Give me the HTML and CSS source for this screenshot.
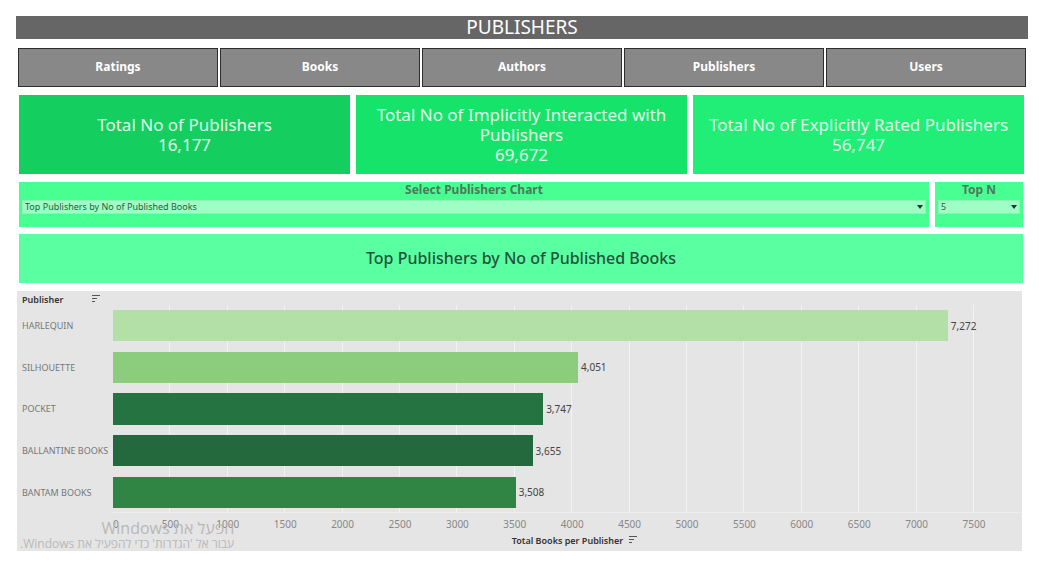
FILE: index.html
```html
<!DOCTYPE html>
<html lang="en">
<head>
<meta charset="utf-8">
<meta name="viewport" content="width=device-width, initial-scale=1">
<title>Publishers</title>
<link rel="stylesheet" href="styles.css">
</head>
<body>
<header class="banner"><h1>PUBLISHERS</h1></header>
<main class="dashboard">
  <nav class="tabs">
    <a href="#ratings">Ratings</a>
    <a href="#books">Books</a>
    <a href="#authors">Authors</a>
    <a href="#publishers" aria-current="page">Publishers</a>
    <a href="#users">Users</a>
  </nav>

  <section class="totals">
    <div class="total total-all"><p>Total No of Publishers</p><p>16,177</p></div>
    <div class="total total-implicit"><p>Total No of Implicitly Interacted with Publishers</p><p>69,672</p></div>
    <div class="total total-explicit"><p>Total No of Explicitly Rated Publishers</p><p>56,747</p></div>
  </section>

  <section class="filters">
    <div class="filter filter-chart">
      <label for="chart">Select Publishers Chart</label>
      <div class="dropdown">
        <select id="chart"><option>Top Publishers by No of Published Books</option></select>
        <svg class="caret" viewBox="0 0 6 4" aria-hidden="true"><path d="M0 0h6L3 4z"/></svg>
      </div>
    </div>
    <div class="filter filter-top">
      <label for="top">Top N</label>
      <div class="dropdown">
        <select id="top"><option>5</option></select>
        <svg class="caret" viewBox="0 0 6 4" aria-hidden="true"><path d="M0 0h6L3 4z"/></svg>
      </div>
    </div>
  </section>

  <h2 class="chart-title">Top Publishers by No of Published Books</h2>

  <section class="chart">
    <div class="chart-head">
      <span>Publisher</span>
      <svg class="sort" viewBox="0 0 8 8" aria-hidden="true"><path d="M0 .5h8M0 3.5h5M0 6.5h3"/></svg>
    </div>
    <ul class="names">
      <li>HARLEQUIN</li><li>SILHOUETTE</li><li>POCKET</li><li>BALLANTINE BOOKS</li><li>BANTAM BOOKS</li>
    </ul>
    <div class="gridlines" aria-hidden="true">
      <i></i><i></i><i></i><i></i><i></i><i></i><i></i><i></i><i></i><i></i><i></i><i></i><i></i><i></i><i></i>
    </div>
    <div class="bars">
      <div class="row"><div class="bar green-1" style="width:91.84%"></div><span>7,272</span></div>
      <div class="row"><div class="bar green-2" style="width:51.16%"></div><span>4,051</span></div>
      <div class="row"><div class="bar green-4" style="width:47.32%"></div><span>3,747</span></div>
      <div class="row"><div class="bar green-5" style="width:46.16%"></div><span>3,655</span></div>
      <div class="row"><div class="bar green-3" style="width:44.3%"></div><span>3,508</span></div>
    </div>
    <div class="axis">
      <span>0</span><span>500</span><span>1000</span><span>1500</span><span>2000</span><span>2500</span><span>3000</span><span>3500</span><span>4000</span><span>4500</span><span>5000</span><span>5500</span><span>6000</span><span>6500</span><span>7000</span><span>7500</span>
    </div>
    <div class="axis-title">
      <span>Total Books per Publisher</span>
      <svg class="sort" viewBox="0 0 8 8" aria-hidden="true"><path d="M0 .5h8M0 3.5h5M0 6.5h3"/></svg>
    </div>
    <div class="watermark" lang="he" dir="rtl">
      <p class="watermark-title">הפעל את Windows</p>
      <p>עבור אל 'הגדרות' כדי להפעיל את Windows.</p>
    </div>
  </section>
</main>
</body>
</html>
```

FILE: styles.css
```css
* { box-sizing: border-box; }

body {
  margin: 0;
  padding: 16px 11px 12px 16px;
  background: #fff;
  color: #333;
  font-family: "Noto Sans", "Open Sans", sans-serif;
}

h1, h2, p, ul { margin: 0; padding: 0; font-weight: 400; }
ul { list-style: none; }

.banner { background: #666; color: #fff; text-align: center; }
.banner h1 { font-size: 19px; line-height: 23px; }

.dashboard { display: flex; flex-direction: column; }

.tabs {
  display: grid;
  grid-template-columns: repeat(5, 1fr);
  gap: 2px;
  margin: 9px 2px 0;
}
.tabs a {
  padding: 7px 8px 9px;
  border: 1px solid #2d2d2d;
  background: #888;
  color: #fff;
  font-size: 12px;
  font-weight: 700;
  line-height: 21px;
  text-align: center;
  text-decoration: none;
}

.totals {
  display: grid;
  grid-template-columns: repeat(3, 1fr);
  gap: 6px;
  margin: 8px 4px 0 3px;
}
.total {
  display: flex;
  flex-direction: column;
  justify-content: center;
  min-height: 79px;
  padding: 9px 12px;
  color: #e0fbe8;
  font-size: 17px;
  line-height: 20px;
  text-align: center;
}
.total-all { background: #14cf60; }
.total-implicit { background: #16e36a; }
.total-explicit { background: #20ee76; }

.filters {
  display: grid;
  grid-template-columns: 1fr 88px;
  gap: 6px;
  margin: 8px 5px 0 3px;
}
.filter {
  display: flex;
  flex-direction: column;
  padding: 0 3px 13px;
  background: #48ff91;
}
.filter label {
  padding-bottom: 3px;
  color: #4b7a5c;
  font-size: 12px;
  font-weight: 700;
  line-height: 15px;
  text-align: center;
}
.dropdown { display: grid; grid-template-columns: 1fr 13px; align-items: center; }
.dropdown select {
  grid-area: 1 / 1 / 2 / 3;
  width: 100%;
  height: 14px;
  padding: 0 2px;
  border: 1px solid #8ef2b4;
  border-radius: 0;
  background: #9dffc4;
  color: #2c5c40;
  font-family: inherit;
  font-size: 9px;
  line-height: 12px;
  appearance: none;
}
.caret {
  grid-area: 1 / 2;
  justify-self: center;
  width: 6px;
  height: 4px;
  fill: #113d22;
  pointer-events: none;
}

.chart-title {
  margin: 7px 5px 0 3px;
  padding: 14px;
  background: #5affa2;
  color: #24533a;
  font-size: 16px;
  font-weight: 500;
  line-height: 21px;
  text-align: center;
}

.chart {
  display: grid;
  grid-template-columns: 96px 1fr;
  grid-template-rows: 14px 208px 21px 17px;
  margin: 8px 6px 0 1px;
  background: #e5e5e5;
}
.chart-head {
  grid-area: 1 / 1;
  display: flex;
  align-items: center;
  justify-content: space-between;
  padding: 2px 13px 0 5px;
  font-size: 9px;
  font-weight: 600;
}
.sort { width: 8px; height: 8px; fill: none; stroke: #555; }

.names { grid-area: 2 / 1; display: grid; grid-auto-rows: 1fr; padding-left: 5px; }
.names li {
  display: flex;
  align-items: center;
  color: #777;
  font-size: 9px;
  white-space: nowrap;
}

.gridlines {
  grid-area: 2 / 2;
  display: grid;
  grid-template-columns: repeat(15, 500fr) 418fr;
  border-bottom: 1px solid #ededed;
}
.gridlines i { border-right: 1px solid #f2f2f2; }

.bars { grid-area: 2 / 2; display: grid; grid-auto-rows: 1fr; }
.row { display: flex; align-items: center; }
.bar { flex: none; height: 75%; }
.row span { padding-left: 3px; font-size: 10px; color: #444; }
.green-1 { background: #b2e0a7; }
.green-2 { background: #8bcd7d; }
.green-3 { background: #308544; }
.green-4 { background: #257340; }
.green-5 { background: #24693d; }

.axis {
  grid-area: 3 / 2;
  display: grid;
  grid-template-columns: 250fr repeat(15, 500fr) 168fr;
  align-items: center;
  color: #888;
  font-size: 10px;
  text-align: center;
}
.axis span:first-child { text-align: left; }

.axis-title {
  grid-area: 4 / 2;
  display: flex;
  align-items: center;
  justify-content: center;
  gap: 6px;
  padding: 0 0 5px 14px;
  font-size: 9px;
  font-weight: 600;
}

.watermark {
  grid-area: 3 / 1 / 5 / 3;
  justify-self: start;
  align-self: end;
  padding-left: 3px;
  color: #b8b8b8;
  font-family: "Open Sans", "DejaVu Sans", sans-serif;
  font-size: 12px;
  line-height: 14px;
  pointer-events: none;
}
.watermark-title { font-size: 16px; line-height: 18px; }
```
